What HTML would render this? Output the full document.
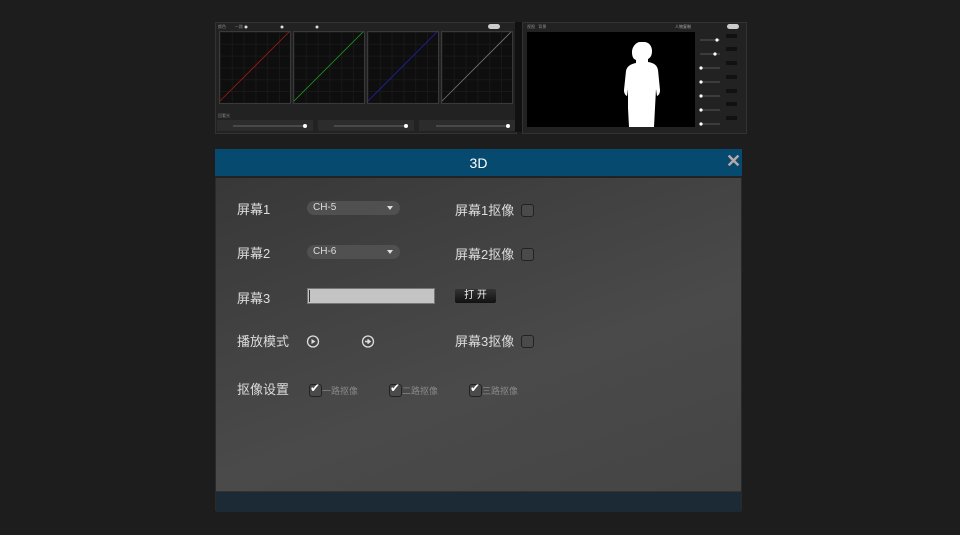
<!DOCTYPE html>
<html><head><meta charset="utf-8"><style>
body{margin:0;width:960px;height:535px;background:#1d1d1d;position:relative;overflow:hidden;font-family:"Liberation Sans","Noto Sans CJK SC",sans-serif;}
.a{position:absolute}
.box{position:absolute;background:#0e0e0e;border:1px solid #3a3a3a;
background-image:linear-gradient(#181818 1px,transparent 1px),linear-gradient(90deg,#181818 1px,transparent 1px);background-size:11.8px 11.8px;}
.lbl{position:absolute;color:#ddd;font-size:13px}
.sel{position:absolute;width:93px;height:14px;border-radius:7px;background:#505050;color:#ddd;font-size:10px;line-height:14px;padding-left:6px;box-sizing:border-box}
.sel:after{content:"";position:absolute;right:7px;top:5px;border:3.5px solid transparent;border-top:4px solid #ddd}
.cb{position:absolute;width:11px;height:11px;border:1px solid #222;border-radius:3px;background:#4a4a4a}
.ck{position:absolute;color:#fff;font-size:12px}
.cl{position:absolute;color:#888;font-size:9px}
.sm{position:absolute;color:#888;font-size:4px}
</style></head><body>
<div class="a" style="left:215px;top:22px;width:300px;height:110px;background:#222;border:1px solid #333"></div>
<div class="a" style="left:522px;top:22px;width:223px;height:110px;background:#222;border:1px solid #333"></div>
<div class="a" style="left:515px;top:22px;width:7px;height:110px;background:#111"></div>
<div class="box" style="left:219px;top:31px;width:70px;height:71px"></div>
<div class="box" style="left:293px;top:31px;width:70px;height:71px"></div>
<div class="box" style="left:367px;top:31px;width:70px;height:71px"></div>
<div class="box" style="left:441px;top:31px;width:70px;height:71px"></div>
<svg class="a" style="left:0;top:0" width="960" height="140">
<line x1="220" y1="101" x2="289" y2="32" stroke="#a01818" stroke-width="0.8"/>
<line x1="294" y1="101" x2="363" y2="32" stroke="#20a020" stroke-width="0.8"/>
<line x1="368" y1="101" x2="437" y2="32" stroke="#2020b0" stroke-width="0.8"/>
<line x1="442" y1="101" x2="511" y2="32" stroke="#777" stroke-width="0.8"/>
<circle cx="246" cy="27" r="1.5" fill="#ddd"/><circle cx="282" cy="27" r="1.5" fill="#ddd"/><circle cx="317" cy="27" r="1.5" fill="#ddd"/>
<rect x="488" y="24" width="12" height="5" rx="2.5" fill="#ccc"/>
<rect x="727" y="24" width="12" height="5" rx="2.5" fill="#ccc"/>
<rect x="217" y="120" width="96" height="11" fill="#2c2c2c"/><rect x="318" y="120" width="96" height="11" fill="#2c2c2c"/><rect x="419" y="120" width="96" height="11" fill="#2c2c2c"/>
<line x1="233" y1="126" x2="305" y2="126" stroke="#666"/><line x1="334" y1="126" x2="406" y2="126" stroke="#666"/><line x1="436" y1="126" x2="508" y2="126" stroke="#666"/>
<circle cx="305" cy="126" r="2" fill="#fff"/><circle cx="406" cy="126" r="2" fill="#fff"/><circle cx="508" cy="126" r="2" fill="#fff"/>
<rect x="527" y="32" width="168" height="95" fill="#000"/>
<path d="M644 42c5 0 8 4 8 9c0 5-2 7-4 8l0 3c6 1 9 3 10 8l2 20c0 3-1 5-3 6l-1-7l-1 19l-1 19l-25 0l-1-19l0-19l-1 7c-2-1-3-3-3-6l2-19c1-5 5-7 10-8l0-3c-3-1-4-4-4-8c0-5 4-10 8-10z" fill="#fff"/>
<g stroke="#555"><line x1="700" y1="40" x2="720" y2="40"/><line x1="700" y1="54" x2="720" y2="54"/><line x1="700" y1="68" x2="720" y2="68"/><line x1="700" y1="82" x2="720" y2="82"/><line x1="700" y1="96" x2="720" y2="96"/><line x1="700" y1="110" x2="720" y2="110"/><line x1="700" y1="124" x2="720" y2="124"/></g>
<g fill="#fff"><circle cx="717" cy="40" r="1.6"/><circle cx="715" cy="54" r="1.6"/><circle cx="701" cy="68" r="1.6"/><circle cx="701" cy="82" r="1.6"/><circle cx="701" cy="96" r="1.6"/><circle cx="701" cy="110" r="1.6"/><circle cx="701" cy="124" r="1.6"/></g>
<g fill="#111"><rect x="726" y="34" width="11" height="4"/><rect x="726" y="47" width="11" height="4"/><rect x="726" y="61" width="11" height="4"/><rect x="726" y="75" width="11" height="4"/><rect x="726" y="89" width="11" height="4"/><rect x="726" y="102" width="11" height="4"/><rect x="726" y="116" width="11" height="4"/></g>
</svg>
<div class="sm" style="left:218px;top:24px">颜色 &nbsp;&nbsp;&nbsp;&nbsp;&nbsp;&nbsp; 一路</div>
<div class="sm" style="left:218px;top:113px">回看光</div>
<div class="sm" style="left:527px;top:24px">视图 &nbsp; 背景</div>
<div class="sm" style="left:675px;top:24px;color:#aaa">人物复制</div>
<div class="a" style="left:215px;top:149px;width:527px;height:362px;background:linear-gradient(160deg,#363636,#4a4a4a 60%,#444);border:1px solid #2a2a2a;box-sizing:border-box"></div>
<div class="a" style="left:215px;top:149px;width:527px;height:29px;background:#064a6f;border-bottom:2px solid #222;box-sizing:border-box;color:#fff;text-align:center;font-size:14px;line-height:28px">3D</div>
<div class="a" style="left:726px;top:151px;color:#b8a8a8;font-size:18px;font-weight:bold">✕</div>
<div class="a" style="left:216px;top:491px;width:525px;height:20px;background:#1b2a34;border-top:1px solid #333"></div>
<div class="lbl" style="left:237px;top:199px">屏幕1</div>
<div class="lbl" style="left:237px;top:243px">屏幕2</div>
<div class="lbl" style="left:237px;top:288px">屏幕3</div>
<div class="lbl" style="left:237px;top:331px">播放模式</div>
<div class="lbl" style="left:237px;top:379px">抠像设置</div>
<div class="sel" style="left:307px;top:201px">CH-5</div>
<div class="sel" style="left:307px;top:245px">CH-6</div>
<div class="a" style="left:307px;top:288px;width:128px;height:16px;background:#c4c4c4;border:1px solid #777;box-sizing:border-box"></div>
<div class="a" style="left:309px;top:290px;width:1px;height:12px;background:#333"></div>
<div class="a" style="left:455px;top:289px;width:41px;height:14px;background:linear-gradient(#333,#111);border-radius:2px;color:#eee;font-size:10px;text-align:center;line-height:14px">打 开</div>
<div class="lbl" style="left:455px;top:200px">屏幕1抠像</div>
<div class="lbl" style="left:455px;top:244px">屏幕2抠像</div>
<div class="lbl" style="left:455px;top:331px">屏幕3抠像</div>
<div class="cb" style="left:521px;top:204px"></div>
<div class="cb" style="left:521px;top:248px"></div>
<div class="cb" style="left:521px;top:335px"></div>
<svg class="a" style="left:305px;top:334px" width="80" height="16">
<circle cx="8" cy="7.5" r="5.5" fill="none" stroke="#ddd" stroke-width="1.3"/><path d="M6.5 5v5l4-2.5z" fill="#ddd"/>
<circle cx="63" cy="7.5" r="5.5" fill="none" stroke="#ddd" stroke-width="1.3"/><path d="M60 7.5h4.5M62.5 5.5l2.5 2-2.5 2" stroke="#ddd" stroke-width="1.5" fill="none"/>
</svg>
<div class="cb" style="left:309px;top:384px"></div><div class="ck" style="left:310px;top:381px">✔</div><div class="cl" style="left:322px;top:384px">一路抠像</div>
<div class="cb" style="left:389px;top:384px"></div><div class="ck" style="left:390px;top:381px">✔</div><div class="cl" style="left:402px;top:384px">二路抠像</div>
<div class="cb" style="left:469px;top:384px"></div><div class="ck" style="left:470px;top:381px">✔</div><div class="cl" style="left:482px;top:384px">三路抠像</div>
</body></html>
